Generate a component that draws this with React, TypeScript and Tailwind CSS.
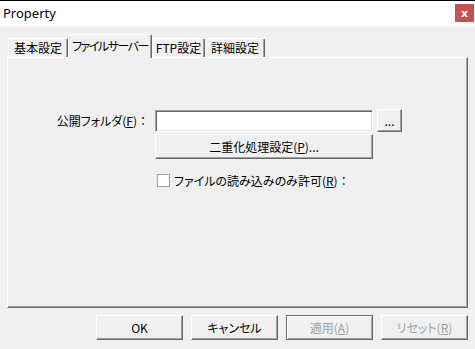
const raised =
  "border border-t-white border-l-white border-r-[#696969] border-b-[#696969] shadow-[inset_-1px_-1px_#a0a0a0]";

function Btn({ children, className = "", disabled = false, def = false }: { children: React.ReactNode; className?: string; disabled?: boolean; def?: boolean }) {
  return (
    <button
      className={
        "flex items-center justify-center whitespace-nowrap bg-[#f0f0f0] text-[12px] leading-none " +
        (def
          ? "border border-[#696969] shadow-[inset_1px_1px_#fff,inset_-1px_-1px_#a0a0a0] "
          : raised + " ") +
        (disabled ? "text-[#a0a0a0] " : "text-black ") +
        className
      }
    >
      {children}
    </button>
  );
}

function Tab({ label, width, active = false, tight = false }: { label: string; width: string; active?: boolean; tight?: boolean }) {
  return (
    <div
      className={
        "flex items-center justify-center whitespace-nowrap border-l border-t border-r border-l-white border-t-white border-r-[#696969] rounded-t-[2px] bg-[#f0f0f0] shadow-[inset_-1px_0_#a0a0a0] " +
        width +
        (active ? " relative z-10 h-[24px] -mb-[1px] pb-[2px]" : " h-[19px]")
      }
    >
      <span className={"text-[12px] leading-none text-black" + (tight ? " tracking-[-1.5px]" : "")}>{label}</span>
    </div>
  );
}

export default function App() {
  return (
    <div className="w-[475px] h-[349px] bg-[#f0f0f0] font-['Noto_Sans_CJK_JP','Noto_Sans',sans-serif] [font-feature-settings:'palt'] flex flex-col overflow-hidden">
      {/* title bar */}
      <div className="h-[26px] border-t border-black bg-white flex items-start justify-between">
        <span className="pl-[3px] pt-[4px] text-[13px] leading-[16px] text-black font-['Noto_Sans',sans-serif]">Property</span>
        <div className="mt-[3px] mr-[1px] w-[19px] h-[18px] bg-[#c75050] flex items-center justify-center">
          <span className="text-white text-[11px] font-bold leading-none font-['DejaVu_Sans',sans-serif]">x</span>
        </div>
      </div>

      <div className="flex-1 pt-[8px] px-[7px] flex flex-col">
        {/* tabs */}
        <div className="h-[23px] flex items-end pl-[1px]">
          <Tab label="基本設定" width="w-[60px]" />
          <Tab label="ファイルサーバー" width="w-[84px]" active tight />
          <Tab label="FTP設定" width="w-[53px]" />
          <Tab label="詳細設定" width="w-[60px]" />
        </div>

        {/* panel */}
        <div className={"h-[251px] bg-[#f0f0f0] " + raised}>
          <div className="pt-[51px] grid grid-cols-[143px_218px_auto] gap-x-[4px] gap-y-[2px] items-center">
            <span className="text-right text-[12px] leading-none text-black pr-[2px] whitespace-nowrap">
              公開フォルダ(<u>F</u>)<span className="[font-feature-settings:normal]">：</span>
            </span>
            <div className="h-[22px] bg-white border border-t-[#a0a0a0] border-l-[#a0a0a0] border-r-white border-b-white shadow-[inset_1px_1px_#696969,inset_-1px_-1px_#e3e3e3]" />
            <Btn className="w-[25px] h-[23px]">...</Btn>

            <span />
            <Btn className="w-[218px] h-[25px]">
              二重化処理設定(<u>P</u>)...
            </Btn>
            <span />

            <span />
            <div className="col-span-2 mt-[13px] flex items-center gap-[4px] pl-[2px]">
              <div className="w-[13px] h-[13px] bg-white border border-[#a0a0a0]" />
              <span className="text-[12px] leading-none text-black whitespace-nowrap">
                ファイルの読み込みのみ許可(<u>R</u>)<span className="[font-feature-settings:normal]">：</span>
              </span>
            </div>
          </div>
        </div>

        {/* buttons */}
        <div className="mt-[7px] flex justify-end gap-[8px]">
          <Btn className="w-[87px] h-[25px]">OK</Btn>
          <Btn className="w-[87px] h-[25px]">キャンセル</Btn>
          <Btn className="w-[87px] h-[25px]" disabled def>
            適用(<u>A</u>)
          </Btn>
          <Btn className="w-[87px] h-[25px]" disabled>
            リセット(<u>R</u>)
          </Btn>
        </div>
      </div>
    </div>
  );
}
